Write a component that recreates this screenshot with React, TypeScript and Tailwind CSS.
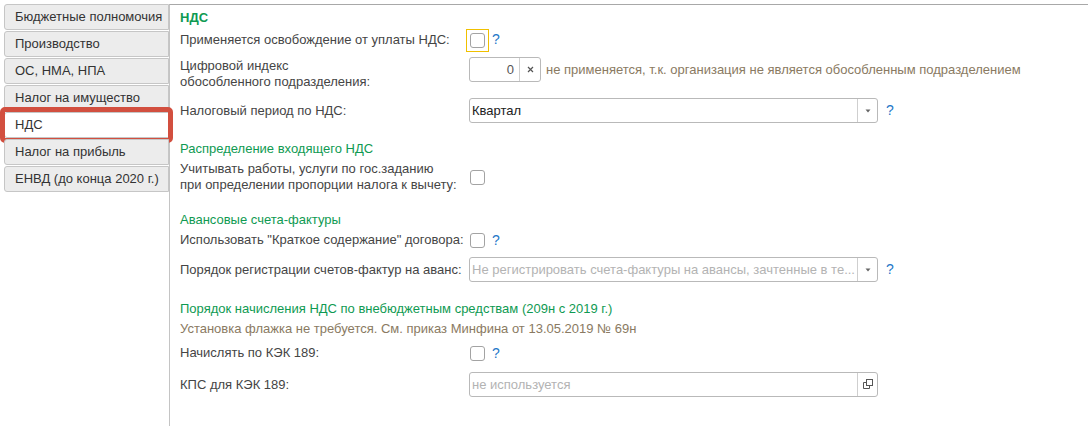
import React from "react";

const tabs = [
  "Бюджетные полномочия",
  "Производство",
  "ОС, НМА, НПА",
  "Налог на имущество",
  "НДС",
  "Налог на прибыль",
  "ЕНВД (до конца 2020 г.)",
];

function Q() {
  return <span className="ml-[7px] text-[14px] leading-none text-[#1f78c8]">?</span>;
}

function Check() {
  return (
    <span className="ml-[1px] block h-[15px] w-[15px] shrink-0 rounded-[3px] border border-[#a3a3a3] bg-white" />
  );
}

function FocusCheck() {
  return (
    <span className="ml-[-3px] flex h-[23px] w-[23px] shrink-0 items-center justify-center border border-[#f0c000]">
      <span className="block h-[15px] w-[15px] rounded-[3px] border border-[#a3a3a3] bg-white" />
    </span>
  );
}

function Tri() {
  return (
    <svg width="6" height="4" viewBox="0 0 6 4">
      <path d="M0.5 0.5 L5.5 0.5 L3 3.5 Z" fill="#666" />
    </svg>
  );
}

function OpenIcon() {
  return (
    <svg width="11" height="11" viewBox="0 0 11 11" fill="none" stroke="#555" strokeWidth="1">
      <rect x="4.5" y="0.5" width="6" height="6" />
      <path d="M4.5 3.5 H1.5 V9.5 H7.5 V6.5" />
    </svg>
  );
}

function Field({
  value,
  placeholder,
  icon,
}: {
  value?: string;
  placeholder?: string;
  icon: React.ReactNode;
}) {
  return (
    <div className="flex h-[25px] w-[409px] shrink-0 rounded-[3px] border border-[#b9b9b9] bg-white">
      <div
        className={
          value
            ? "flex min-w-0 flex-1 items-center overflow-hidden whitespace-nowrap pl-[2px] text-[#222]"
            : "flex min-w-0 flex-1 items-center overflow-hidden whitespace-nowrap pl-[2px] text-[#b3b3b3]"
        }
      >
        {value ?? placeholder}
      </div>
      <div className="flex w-[20px] items-center justify-center border-l border-[#cfcfcf]">{icon}</div>
    </div>
  );
}

function Heading({ children, bold }: { children: React.ReactNode; bold?: boolean }) {
  return (
    <div className={bold ? "h-[16px] font-bold leading-4 text-[#0f9a52]" : "h-[16px] leading-4 text-[#0f9a52]"}>
      {children}
    </div>
  );
}

export default function App() {
  return (
    <div className="flex h-[426px] w-[1088px] overflow-hidden bg-white font-['Liberation_Sans',Arial,sans-serif] text-[13px] text-[#454545]">
      <div className="flex w-[169px] shrink-0 flex-col gap-[1px] pl-[4px] pt-[4px]">
        {tabs.map((t) => {
          const sel = t === "НДС";
          return (
            <div
              key={t}
              className={
                sel
                  ? "relative flex h-[26px] items-center rounded-l-[3px] border border-[#c6c6c6] bg-white pl-[10px] text-[#333]"
                  : "relative flex h-[26px] items-center rounded-l-[3px] border border-[#c6c6c6] bg-[#ececec] pl-[10px] text-[#333]"
              }
            >
              {t}
              {sel && (
                <span className="pointer-events-none absolute bottom-[-6px] left-[-5px] right-[-5px] top-[-6px] rounded-[5px] border-[5px] border-[#d24f3f]" />
              )}
            </div>
          );
        })}
      </div>

      <div className="mt-[4px] flex-1 border-l border-t border-l-[#c4c4c4] border-t-[#a8a8a8] pl-[10px]">
        <div className="mt-[5px]">
          <Heading bold>НДС</Heading>
        </div>

        <div className="mt-[2px] flex h-[24px] items-center">
          <div className="w-[289px] shrink-0 leading-4">Применяется освобождение от уплаты НДС:</div>
          <FocusCheck />
          <span className="ml-[-4px]">
            <Q />
          </span>
        </div>

        <div className="mt-[5px] flex items-start">
          <div className="mt-[1px] w-[289px] shrink-0 leading-4">
            Цифровой индекс
            <br />
            обособленного подразделения:
          </div>
          <div className="flex h-[25px] w-[72px] shrink-0 rounded-[3px] border border-[#b9b9b9] bg-white">
            <div className="flex flex-1 items-center justify-end pr-[5px] text-[#555]">0</div>
            <div className="flex w-[21px] items-center justify-center border-l border-[#cfcfcf]">
              <svg width="7" height="7" viewBox="0 0 7 7" stroke="#555" strokeWidth="1.2">
                <path d="M1 1 L6 6 M6 1 L1 6" />
              </svg>
            </div>
          </div>
          <div className="ml-[5px] flex h-[25px] items-center whitespace-nowrap text-[#8a7a62]">
            не применяется, т.к. организация не является обособленным подразделением
          </div>
        </div>

        <div className="mt-[8px] flex items-center">
          <div className="w-[289px] shrink-0 leading-4">Налоговый период по НДС:</div>
          <Field value="Квартал" icon={<Tri />} />
          <span className="ml-[1px]">
            <Q />
          </span>
        </div>

        <div className="mt-[18px]">
          <Heading>Распределение входящего НДС</Heading>
        </div>

        <div className="mt-[4px] flex items-center">
          <div className="w-[289px] shrink-0 leading-4">
            Учитывать работы, услуги по гос.заданию
            <br />
            при определении пропорции налога к вычету:
          </div>
          <Check />
        </div>

        <div className="mt-[19px]">
          <Heading>Авансовые счета-фактуры</Heading>
        </div>

        <div className="mt-[4px] flex h-[16px] items-center">
          <div className="w-[289px] shrink-0 whitespace-nowrap leading-4">
            Использовать "Краткое содержание" договора:
          </div>
          <Check />
          <Q />
        </div>

        <div className="mt-[9px] flex items-center">
          <div className="w-[289px] shrink-0 leading-4">Порядок регистрации счетов-фактур на аванс:</div>
          <Field placeholder="Не регистрировать счета-фактуры на авансы, зачтенные в те..." icon={<Tri />} />
          <span className="ml-[1px]">
            <Q />
          </span>
        </div>

        <div className="mt-[19px]">
          <Heading>Порядок начисления НДС по внебюджетным средствам (209н с 2019 г.)</Heading>
        </div>
        <div className="mt-[4px] h-[16px] leading-4 text-[#8a7a62]">
          Установка флажка не требуется. См. приказ Минфина от 13.05.2019 № 69н
        </div>

        <div className="mt-[8px] flex h-[16px] items-center">
          <div className="w-[289px] shrink-0 leading-4">Начислять по КЭК 189:</div>
          <Check />
          <Q />
        </div>

        <div className="mt-[11px] flex items-center">
          <div className="w-[289px] shrink-0 leading-4">КПС для КЭК 189:</div>
          <Field placeholder="не используется" icon={<OpenIcon />} />
        </div>
      </div>
    </div>
  );
}
